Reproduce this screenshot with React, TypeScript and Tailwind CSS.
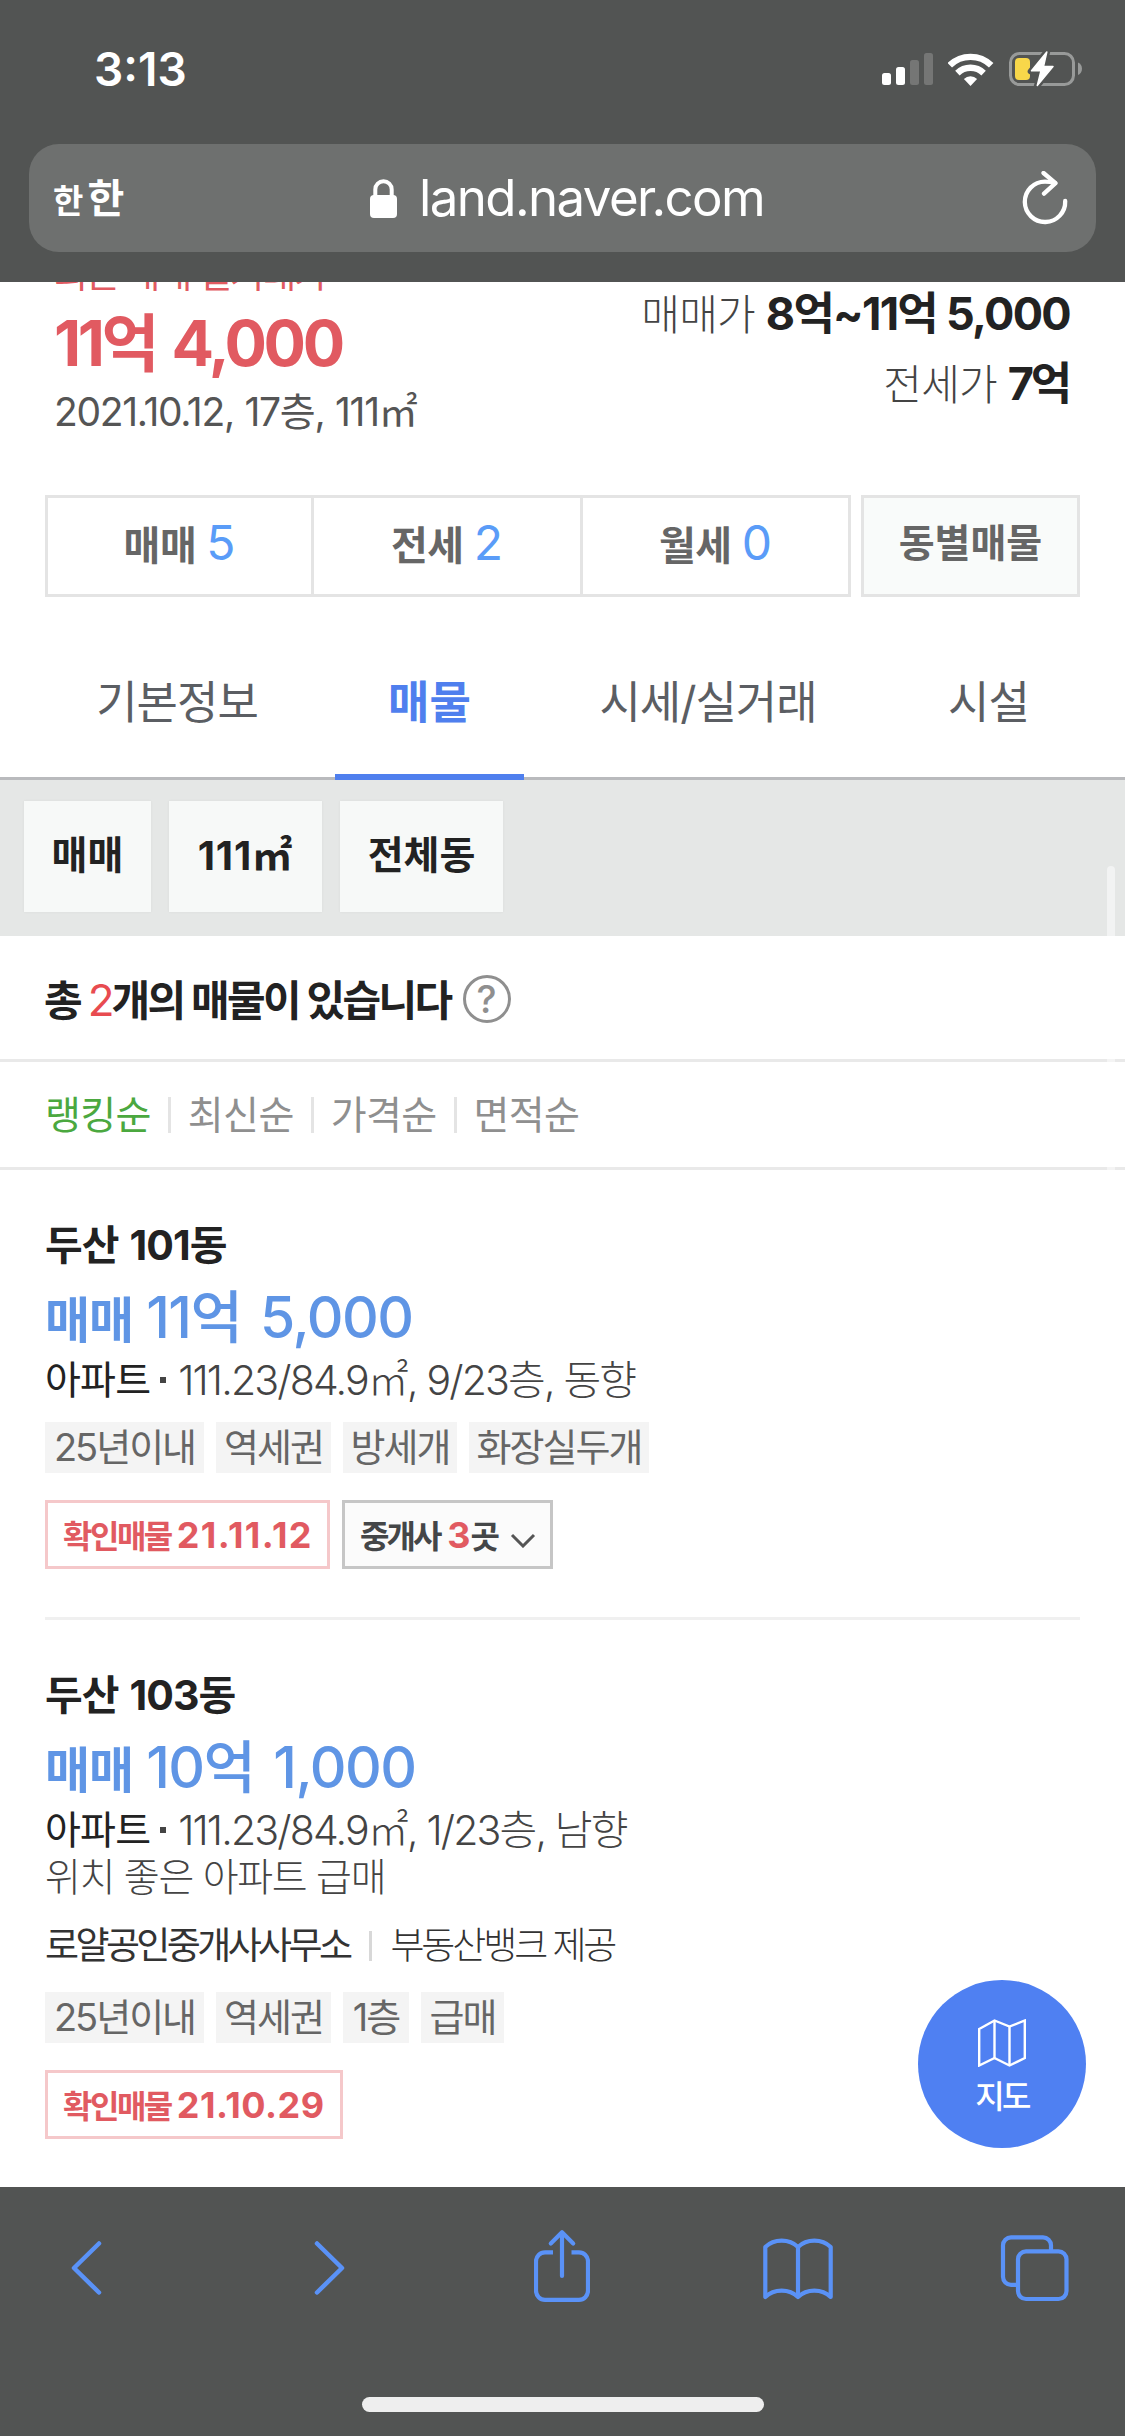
import type { ReactNode } from "react";
import clsx from "clsx";

type Tag = { label: string; width: string };

type Listing = {
  id: number;
  name: string;
  price: string;
  spec: string;
  memo?: string;
  agency?: string;
  provider?: string;
  tags: Tag[];
  verified: string;
  verifiedClass: string;
  agents?: number;
};

const DEALS = [
  { label: "매매", count: 5, cell: "w-[266px] border-r-[3px]" },
  { label: "전세", count: 2, cell: "w-[269px] border-r-[3px]" },
  { label: "월세", count: 0, cell: "flex-1" },
];

const TABS = [
  { label: "기본정보", width: "w-[316px]" },
  { label: "매물", width: "w-[189px]" },
  { label: "시세/실거래", width: "w-[368px]" },
  { label: "시설", width: "w-[193px]" },
];

const SORTS = ["랭킹순", "최신순", "가격순", "면적순"];

const LISTINGS: Listing[] = [
  {
    id: 1,
    name: "두산 101동",
    price: "11억 5,000",
    spec: "111.23/84.9㎡, 9/23층, 동향",
    tags: [
      { label: "25년이내", width: "w-[159px]" },
      { label: "역세권", width: "w-[115px]" },
      { label: "방세개", width: "w-[114px]" },
      { label: "화장실두개", width: "w-[180px]" },
    ],
    verified: "21.11.12",
    verifiedClass: "w-[285px] tracking-[1.4px]",
    agents: 3,
  },
  {
    id: 2,
    name: "두산 103동",
    price: "10억 1,000",
    spec: "111.23/84.9㎡, 1/23층, 남향",
    memo: "위치 좋은 아파트 급매",
    agency: "로얄공인중개사사무소",
    provider: "부동산뱅크 제공",
    tags: [
      { label: "25년이내", width: "w-[159px]" },
      { label: "역세권", width: "w-[115px]" },
      { label: "1층", width: "w-[66px]" },
      { label: "급매", width: "w-[83px]" },
    ],
    verified: "21.10.29",
    verifiedClass: "w-[298px] tracking-[0.5px]",
  },
];

function StatusIcons() {
  return (
    <div className="flex items-center gap-[15px]">
      <svg width="51" height="32" viewBox="0 0 51 32">
        <rect x="0" y="20" width="9" height="12" rx="2.5" fill="#fff" />
        <rect x="14" y="14" width="9" height="18" rx="2.5" fill="#fff" />
        <rect x="28" y="7" width="9" height="25" rx="2.5" fill="#757675" />
        <rect x="42" y="0" width="9" height="32" rx="2.5" fill="#757675" />
      </svg>
      <svg width="46" height="33" viewBox="0 0 46 33" fill="none">
        <path d="M1.8 12.3a29.7 29.7 0 0 1 41.4 0" stroke="#fff" strokeWidth="6.4" />
        <path d="M9.4 20.1a18.8 18.8 0 0 1 26.2 0" stroke="#fff" strokeWidth="6.4" />
        <path d="M15.9 25.9a9.6 9.6 0 0 1 13.2 0L22.5 33z" fill="#fff" />
      </svg>
      <svg width="74" height="38" viewBox="0 -2 74 38">
        <rect x="1.5" y="1.5" width="63" height="31" rx="9" fill="none" stroke="#989a99" strokeWidth="3" />
        <path d="M69 10.5c2.6 1 4 3.5 4 6.3s-1.4 5.3-4 6.3z" fill="#989a99" />
        <rect x="6" y="6" width="15" height="22" rx="4" fill="#f8d74a" />
        <path
          d="M38.3-1 21.7 19.5H32L27.7 34.5 44.7 14H35z"
          fill="#525453"
          stroke="#525453"
          strokeWidth="6"
          strokeLinejoin="round"
        />
        <path
          d="M37.8 0 22.5 18.8H32L28.3 33.5 44 14.6H34.5z"
          fill="#fff"
          stroke="#fff"
          strokeWidth="1.5"
          strokeLinejoin="round"
        />
      </svg>
    </div>
  );
}

function BrowserHeader() {
  return (
    <header className="h-[282px] bg-[#525453] text-white">
      <div className="flex h-[138px] items-center justify-between pr-[42px] pl-[94px]">
        <span className="text-[46px] leading-none font-semibold">3:13</span>
        <StatusIcons />
      </div>
      <div className="mx-[29px] mt-[6px] flex h-[108px] items-center rounded-[30px] bg-[#6e706f] pr-[28px] pl-[24px]">
        <div className="flex w-[317px] items-baseline gap-[4px] pt-[4px] leading-[50px] font-bold">
          <span className="text-[33px]">한</span>
          <span className="text-[40px]">한</span>
        </div>
        <svg width="27" height="39" viewBox="0 0 27 39">
          <path d="M5.3 18v-7.5a8.2 8.2 0 0 1 16.4 0V18" fill="none" stroke="#fff" strokeWidth="4" />
          <rect x="0" y="16" width="27" height="23" rx="4" fill="#fff" />
        </svg>
        <span className="ml-[22px] text-[51px] leading-[60px] tracking-[-1.6px]">land.naver.com</span>
        <svg className="ml-auto" width="46" height="54" viewBox="0 0 46 54" fill="none" stroke="#fff" strokeWidth="4.3" strokeLinecap="round" strokeLinejoin="round">
          <path d="M43.2 30A20.2 20.2 0 1 1 23 10.6c4 0 7 .5 10 1.5" />
          <path d="M21.5 2l12 10.2L22 22.6" />
        </svg>
      </div>
    </header>
  );
}

function PriceSummary() {
  return (
    <section className="flex h-[213px] justify-between overflow-hidden pr-[55px] pl-[54px]">
      <div>
        <div className="mt-[-27px] text-[37px] leading-[40px] tracking-[-2.1px] text-[#e15a61]">최근 매매 실거래가</div>
        <div className="mt-[12px] text-[63px] leading-[72px] font-bold tracking-[-3.4px] text-[#e15a61] [word-spacing:4px]">11억 4,000</div>
        <div className="mt-[8px] text-[39px] leading-[50px] tracking-[-1.3px] text-[#555] [word-spacing:1px]">2021.10.12, 17층, 111㎡</div>
      </div>
      <div className="mt-[-3px] leading-[70px]">
        <PriceRow label="매매가" value="8억~11억 5,000" valueClass="tracking-[-1.7px]" />
        <PriceRow label="전세가" value="7억" valueClass="mr-[1px] tracking-[-3.2px]" />
      </div>
    </section>
  );
}

function PriceRow({ label, value, valueClass }: { label: string; value: string; valueClass: string }) {
  return (
    <div className="flex h-[70px] items-baseline justify-end gap-[11px]">
      <span className="text-[42px] font-light tracking-[-0.8px] text-[#444]">{label}</span>
      <span className={clsx("text-[45px] font-bold text-[#222]", valueClass)}>{value}</span>
    </div>
  );
}

function DealCounts() {
  return (
    <section className="flex h-[102px] gap-[10px] px-[45px]">
      <div className="flex flex-1 border-[3px] border-[#e4e4e4]">
        {DEALS.map((d) => (
          <div
            key={d.label}
            className={clsx("flex items-center justify-center border-[#e4e4e4] pb-[4px] leading-[60px]", d.cell)}
          >
            <div className="flex items-baseline gap-[10px]">
              <span className="text-[40px] font-bold tracking-[-0.5px] text-[#666]">{d.label}</span>
              <span className="text-[48px] text-[#5a9cf8]">{d.count}</span>
            </div>
          </div>
        ))}
      </div>
      <div className="flex w-[219px] items-center justify-center border-[3px] border-[#e4e4e4] bg-[#f9fbfa] pb-[6px] text-[39px] leading-[50px] font-bold text-[#666]">
        동별매물
      </div>
    </section>
  );
}

function Tabs() {
  return (
    <nav className="flex border-b-[3px] border-[#b9babd] pl-[19px] text-[45px] leading-[60px]">
      {TABS.map((t) => (
        <div
          key={t.label}
          className={clsx(
            "-mb-[3px] flex h-[183px] items-center justify-center border-b-[6px] pt-[34px]",
            t.width,
            t.label === "매물"
              ? "border-[#4f7fee] font-bold text-[#4f7fee]"
              : "border-transparent tracking-[-1px] text-[#5b5e63]",
          )}
        >
          {t.label}
        </div>
      ))}
    </nav>
  );
}

function Filter({ className, children }: { className: string; children: ReactNode }) {
  return (
    <div className={clsx("flex h-[111px] items-center justify-center bg-[#f7f9f8] pb-[2px] font-bold text-[#222] shadow-[0_0_3px_rgba(0,0,0,0.05)]", className)}>
      {children}
    </div>
  );
}

function ListingItem({ item }: { item: Listing }) {
  return (
    <article className="mx-[45px] border-b-[3px] border-[#f0f0f0] pt-[50px] pb-[48px] last:border-0 last:pb-0">
      <h3 className="text-[41px] leading-[50px] font-bold tracking-[-0.9px] text-[#222] [word-spacing:2px]">{item.name}</h3>
      <div className="mt-[16px] flex h-[64px] items-baseline gap-[13px] leading-[64px] text-[#5f95e5]">
        <span className="text-[49px] font-bold tracking-[-1px]">매매</span>
        <span className="text-[57px] font-medium tracking-[-1.5px] [word-spacing:5px]">{item.price}</span>
      </div>
      <div className="mt-[7px] flex h-[46px] items-center leading-[46px]">
        <span className="text-[39px] tracking-[-0.8px] text-[#222]">아파트</span>
        <i className="ml-[10px] size-[6px] bg-[#444]" />
        <span className="ml-[12px] text-[41px] font-light tracking-[-1.83px] text-[#444]">{item.spec}</span>
      </div>
      {item.memo && (
        <p className="text-[39px] leading-[48px] font-light tracking-[-1.3px] text-[#444]">{item.memo}</p>
      )}
      {item.agency && (
        <div className="mt-[23px] flex h-[44px] items-center text-[37px] leading-[44px]">
          <span className="tracking-[-3.6px] text-[#333]">{item.agency}</span>
          <i className="ml-[20px] h-[30px] w-[3px] bg-[#d8d8d8]" />
          <span className="ml-[18px] font-light tracking-[-3.1px] text-[#333]">{item.provider}</span>
        </div>
      )}
      <div className={clsx("flex gap-[12px]", item.agency ? "mt-[24px]" : "mt-[19px]")}>
        {item.tags.map((t) => (
          <span
            key={t.label}
            className={clsx("flex h-[51px] items-center justify-center bg-[#f4f4f4] text-[38px] tracking-[-2px] text-[#666]", t.width)}
          >
            {t.label}
          </span>
        ))}
      </div>
      <div className="mt-[27px] flex gap-[12px] leading-[50px] font-bold">
        <div className={clsx("flex h-[69px] items-center border-[3px] border-[#f5c8ca] pt-[2px] pl-[15px] text-[#e15a61]", item.verifiedClass)}>
          <div className="flex items-baseline gap-[6px]">
            <span className="text-[32px] tracking-[-2.5px]">확인매물</span>
            <span className="text-[36px]">{item.verified}</span>
          </div>
        </div>
        {item.agents && (
          <div className="flex h-[69px] w-[211px] items-center border-[3px] border-[#c6c6c6] bg-[#fbfbfb] pt-[2px] pl-[15px] text-[#444648]">
            <div className="flex items-baseline text-[32px]">
              <span className="tracking-[-3px]">중개사</span>
              <span className="ml-[8px] text-[36px] text-[#e15a61]">{item.agents}</span>
              <span>곳</span>
            </div>
            <svg className="mt-[9px] ml-[10px]" width="26" height="15" viewBox="0 0 26 15" fill="none">
              <path d="M2 2l11 11L24 2" stroke="#555" strokeWidth="3" />
            </svg>
          </div>
        )}
      </div>
    </article>
  );
}

function MapButton() {
  return (
    <button className="absolute right-[39px] bottom-[39px] flex size-[168px] flex-col items-center rounded-full bg-[#4f80f2] pt-[39px] text-white">
      <svg width="48" height="48" viewBox="0 0 48 48" fill="none" stroke="#fff" strokeWidth="2.4">
        <path d="M1.2 10 16.5 1.5 31.5 7.5 46.8 1.5V39L31.5 46.5 16.5 39 1.2 46.5z" />
        <path d="M16.5 1.5V39M31.5 7.5v39" />
      </svg>
      <span className="mt-[12px] text-[32px] leading-[36px] font-medium tracking-[-2.6px]">지도</span>
    </button>
  );
}

function BrowserFooter() {
  return (
    <footer className="flex h-[249px] flex-col items-center justify-between bg-[#525453] pt-[41px] pb-[24px]">
      <div className="flex w-full pl-[71px] text-[#5a92f7]">
        <svg width="31" height="80" viewBox="0 0 31 80" fill="none" stroke="currentColor" strokeWidth="4.5" strokeLinecap="round" strokeLinejoin="round">
          <path d="M28 15.5 3 40l25 24.5" />
        </svg>
        <svg className="ml-[212px]" width="31" height="80" viewBox="0 0 31 80" fill="none" stroke="currentColor" strokeWidth="4.5" strokeLinecap="round" strokeLinejoin="round">
          <path d="M3 15.5 28 40 3 64.5" />
        </svg>
        <svg className="ml-[189px]" width="56" height="80" viewBox="0 0 56 80" fill="none" stroke="currentColor" strokeWidth="4.2">
          <path d="M19 24.3h-8a9 9 0 0 0-9 9v29.5a9 9 0 0 0 9 9h34a9 9 0 0 0 9-9V33.3a9 9 0 0 0-9-9h-7.5" />
          <path d="M28 4.5v43.5M16.8 15.5 28 4.3l11.2 11.2" strokeLinecap="round" strokeLinejoin="round" />
        </svg>
        <svg className="ml-[173px]" width="70" height="80" viewBox="0 0 70 80" fill="none" stroke="currentColor" strokeWidth="4.2" strokeLinejoin="round">
          <path d="M2.3 69V19c8.7-8.5 24-8.5 32.7 0 8.7-8.5 24-8.5 32.7 0v50c-8.7-8.5-24-8.5-32.7 0-8.7-8.5-24-8.5-32.7 0z" />
          <path d="M35 19v50" />
        </svg>
        <svg className="ml-[167px]" width="70" height="80" viewBox="0 0 70 80" fill="none" stroke="currentColor" strokeWidth="4.2">
          <rect x="18" y="23.3" width="48.5" height="47.7" rx="8" />
          <path d="M51 22v-4.7a8 8 0 0 0-8-8H11a8 8 0 0 0-8 8v31.5a8 8 0 0 0 8 8h6" />
        </svg>
      </div>
      <div className="h-[15px] w-[402px] rounded-full bg-[#eee]" />
    </footer>
  );
}

export default function App() {
  return (
    <div className="h-[2436px] w-[1125px] overflow-hidden bg-white font-['Inter','Noto_Sans_CJK_KR',sans-serif] whitespace-nowrap">
      <BrowserHeader />
      <main className="relative h-[1905px] overflow-hidden">
        <PriceSummary />
        <DealCounts />
        <Tabs />

        <div className="flex h-[156px] gap-[18px] bg-[#e5e7e6] pt-[21px] pl-[24px]">
          <Filter className="w-[127px] text-[39px]">매매</Filter>
          <Filter className="w-[153px] text-[40px] tracking-[1px]">111㎡</Filter>
          <Filter className="w-[163px] text-[39px]">전체동</Filter>
        </div>

        {/* result count */}
        <div className="flex h-[126px] items-center border-b-[3px] border-[#e9e9e9] pl-[44px] text-[#222]">
          <div className="flex items-baseline pt-[6px] text-[42px] leading-[60px] font-bold">
            <span>총</span>
            <span className="ml-[5px] text-[44px] font-normal text-[#e84b50]">2</span>
            <span className="ml-[-3px] tracking-[-2.6px]">개의 매물이 있습니다</span>
          </div>
          <span className="mt-[3px] ml-[12px] flex size-[48px] items-center justify-center rounded-full border-[3px] border-[#8f8f8f] text-[38px] leading-none font-medium text-[#8f8f8f]">
            ?
          </span>
        </div>

        {/* sort order */}
        <div className="flex h-[108px] items-center gap-[17px] border-b-[3px] border-[#e9e9e9] pt-[1px] pl-[45px] text-[39px] leading-[60px] tracking-[-0.6px] text-[#8f8f8f]">
          {SORTS.map((s, i) => (
            <div key={s} className="flex items-center gap-[17px]">
              {i > 0 && <i className="h-[36px] w-[3px] bg-[#e4e4e4]" />}
              <span className={clsx(i === 0 && "text-[#4ba83f]")}>{s}</span>
            </div>
          ))}
        </div>

        <div>
          {LISTINGS.map((l) => (
            <ListingItem key={l.id} item={l} />
          ))}
        </div>

        <div className="absolute top-[584px] right-[10px] h-[320px] w-[8px] rounded-full bg-white/50" />
        <MapButton />
      </main>
      <BrowserFooter />
    </div>
  );
}
